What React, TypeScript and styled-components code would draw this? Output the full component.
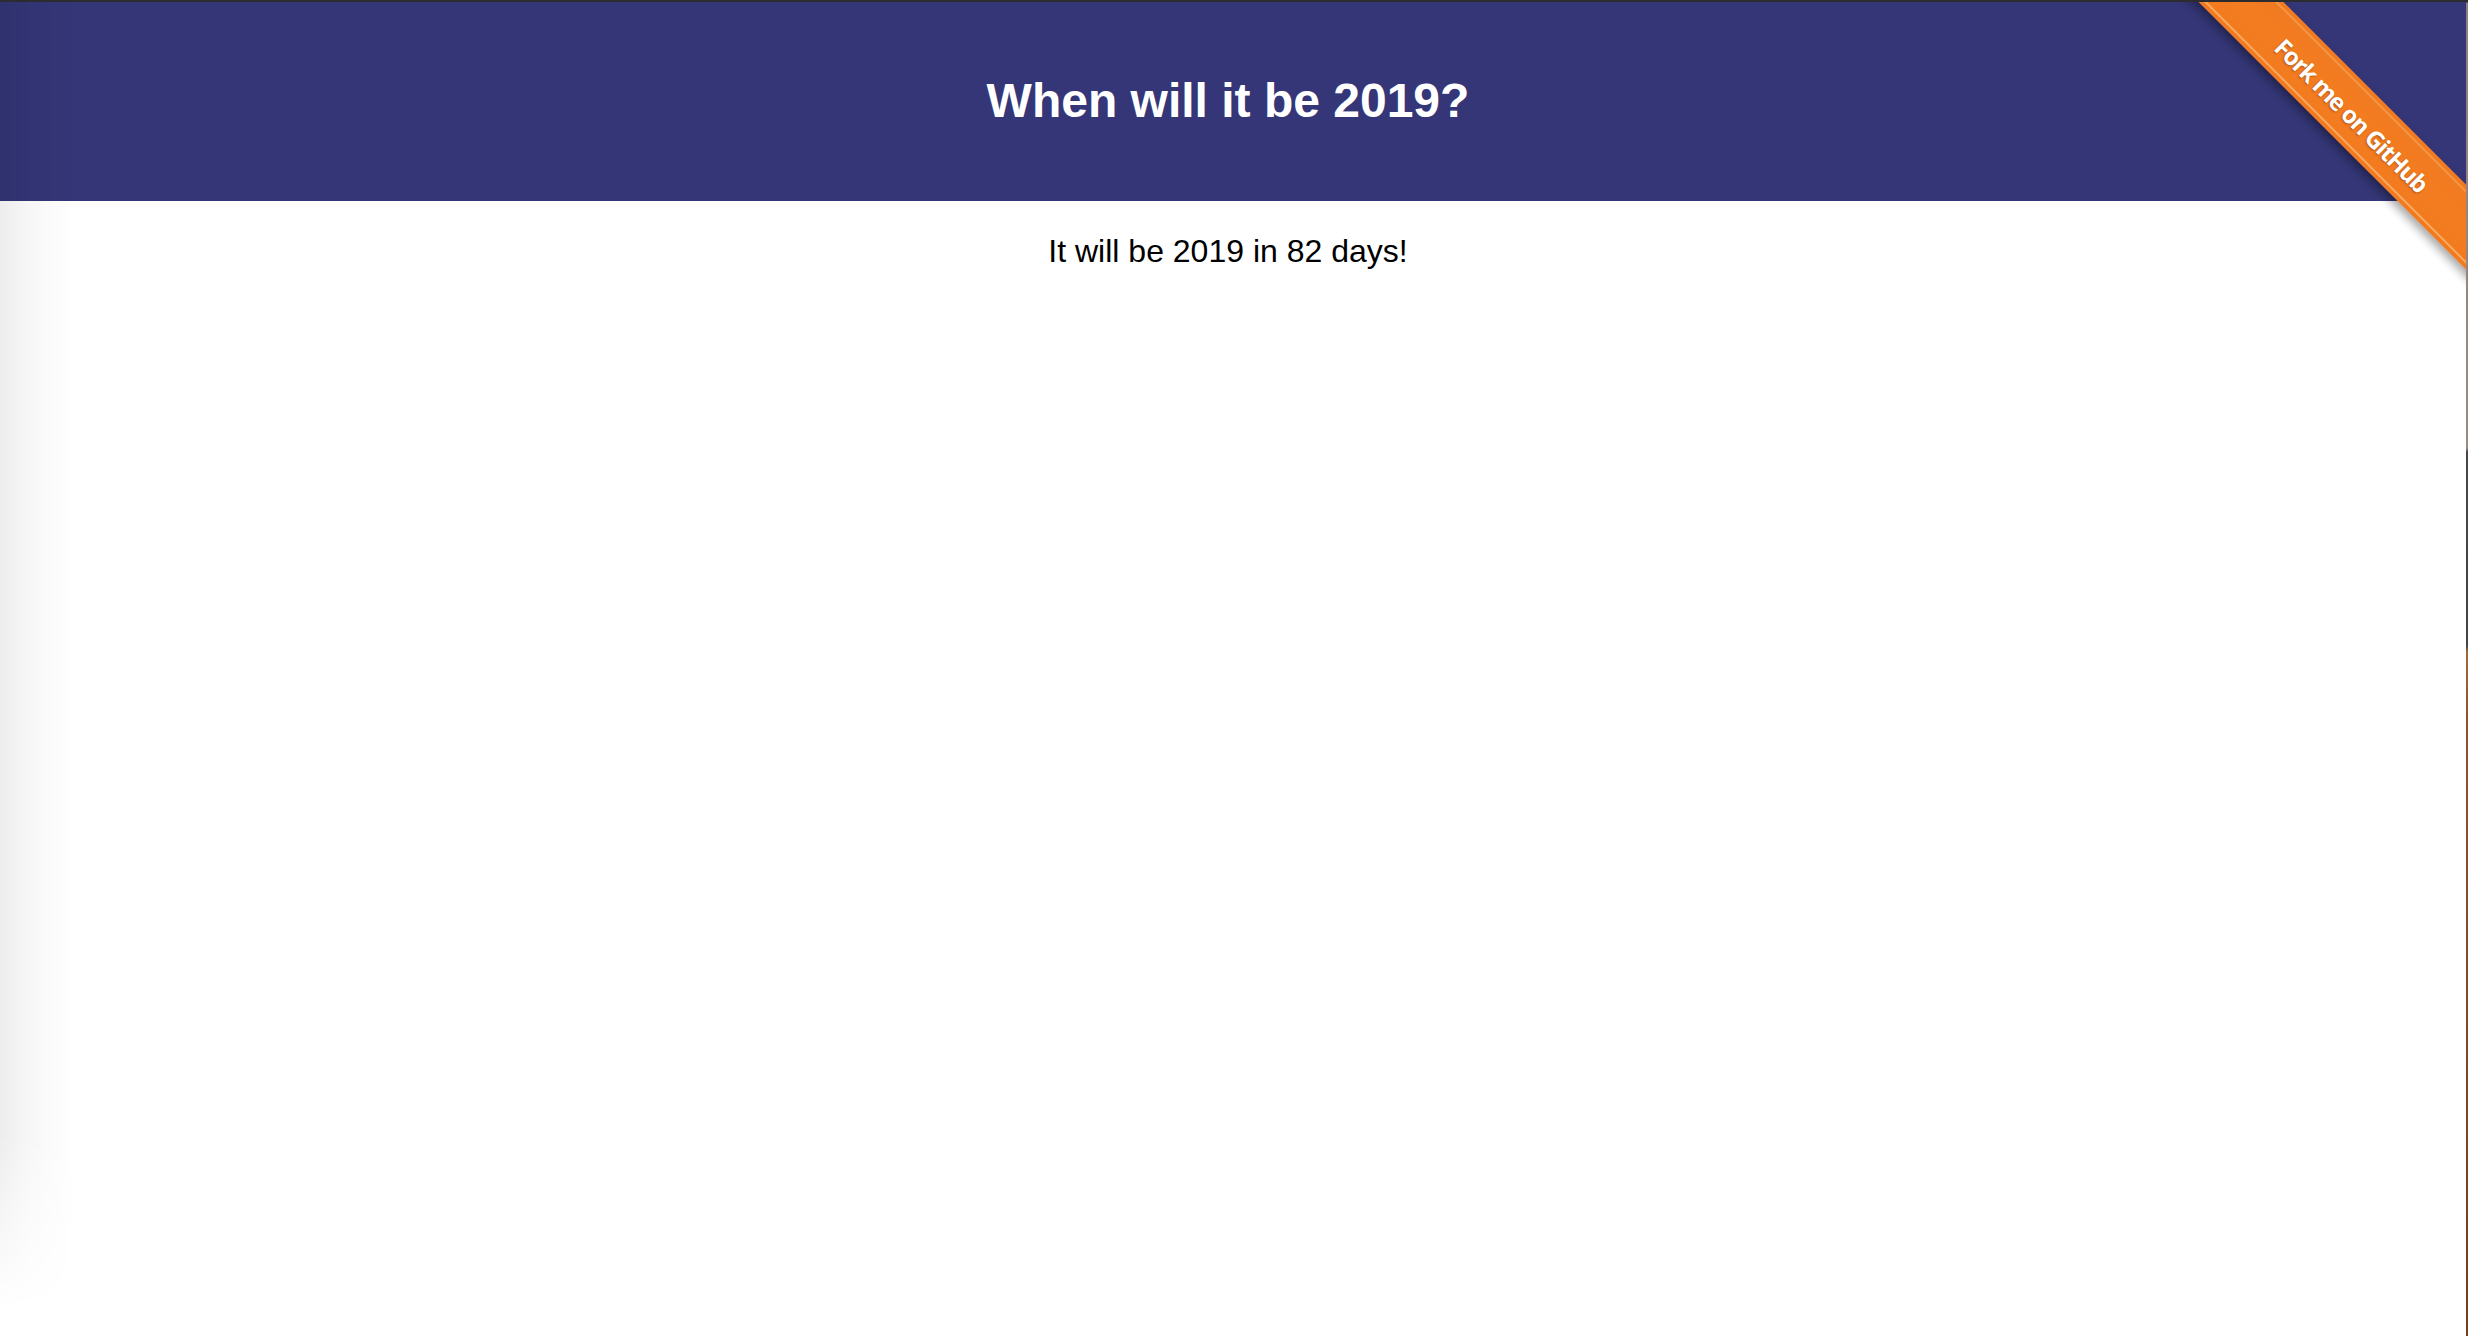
import React from "react";
import styled, { createGlobalStyle } from "styled-components";

const GlobalStyle = createGlobalStyle`
  html, body {
    margin: 0;
    padding: 0;
    background: #ffffff;
  }
  body {
    font-family: "Liberation Sans", Arial, Helvetica, sans-serif;
  }
`;

const Frame = styled.div`
  display: flex;
  flex-direction: row;
  width: 100%;
  min-height: 100vh;
`;

const Page = styled.div`
  position: relative;
  flex: 1;
  display: flex;
  flex-direction: column;
  min-height: 100vh;
  box-sizing: border-box;
  border-top: 2px solid #2b2b30;
  background: #ffffff;
  overflow: hidden;

  &::before {
    content: "";
    position: absolute;
    left: 0;
    top: 0;
    bottom: 0;
    width: 80px;
    pointer-events: none;
    z-index: 2;
    background: linear-gradient(
      to right,
      rgba(0, 0, 0, 0.07) 0px,
      rgba(0, 0, 0, 0.03) 30px,
      rgba(0, 0, 0, 0) 76px
    );
    -webkit-mask-image: linear-gradient(to bottom, #000 0, #000 85%, transparent 98%);
    mask-image: linear-gradient(to bottom, #000 0, #000 85%, transparent 98%);
  }
`;

const EdgeStrip = styled.div`
  width: 2px;
  flex: 0 0 2px;
  background: linear-gradient(
    to bottom,
    #2b2b30 0px,
    #2b2b30 2px,
    #8d807f 3px,
    #9c8a86 448px,
    #4a4646 452px,
    #454242 646px,
    #a06a3c 652px,
    #8b5230 720px,
    #74401f 1300px,
    #74401f 100%
  );
`;

const Header = styled.header`
  height: 199px;
  box-sizing: border-box;
  background: #343677;
  display: flex;
  justify-content: center;
  align-items: flex-start;
  padding: 75px 10px 0 0;
`;

const Title = styled.h1`
  margin: 0;
  font-family: "Liberation Sans", Arial, Helvetica, sans-serif;
  font-weight: 700;
  font-size: 48px;
  line-height: 1;
  color: #ffffff;
  letter-spacing: 0;
`;

const Main = styled.main`
  display: flex;
  justify-content: center;
  padding: 34px 10px 0 0;
`;

const Countdown = styled.p`
  margin: 0;
  font-family: "Liberation Sans", Arial, Helvetica, sans-serif;
  font-size: 32px;
  line-height: 1;
  color: #000000;
`;

const RibbonCorner = styled.a`
  position: absolute;
  top: 0;
  right: 0;
  width: 300px;
  height: 300px;
  overflow: hidden;
  z-index: 3;
  text-decoration: none;
`;

const RibbonBand = styled.div`
  position: absolute;
  left: -63px;
  top: 82px;
  width: 500px;
  height: 60px;
  box-sizing: border-box;
  padding: 4px 0;
  transform: rotate(45deg);
  background: linear-gradient(
    to bottom,
    #f07a22 0%,
    #f47c20 50%,
    #f17a1f 100%
  );
  box-shadow: 0 5px 10px rgba(0, 0, 0, 0.35);
`;

const RibbonInner = styled.div`
  height: 100%;
  box-sizing: border-box;
  border-top: 2px solid rgba(255, 190, 120, 0.4);
  border-bottom: 2px solid rgba(255, 200, 140, 0.6);
  display: flex;
  align-items: center;
  justify-content: center;
  padding-top: 2px;
`;

const RibbonText = styled.span`
  font-family: "Open Sans", "DejaVu Sans", sans-serif;
  font-weight: 700;
  font-size: 24px;
  letter-spacing: -1.2px;
  color: #ffffff;
  text-shadow: 0 1px 2px rgba(120, 50, 0, 0.6);
  white-space: nowrap;
`;

export default function App() {
  return (
    <>
      <GlobalStyle />
      <Frame>
        <Page>
          <Header>
            <Title>When will it be 2019?</Title>
          </Header>
          <Main>
            <Countdown>It will be 2019 in 82 days!</Countdown>
          </Main>
          <RibbonCorner href="#">
            <RibbonBand>
              <RibbonInner>
                <RibbonText>Fork me on GitHub</RibbonText>
              </RibbonInner>
            </RibbonBand>
          </RibbonCorner>
        </Page>
        <EdgeStrip />
      </Frame>
    </>
  );
}
